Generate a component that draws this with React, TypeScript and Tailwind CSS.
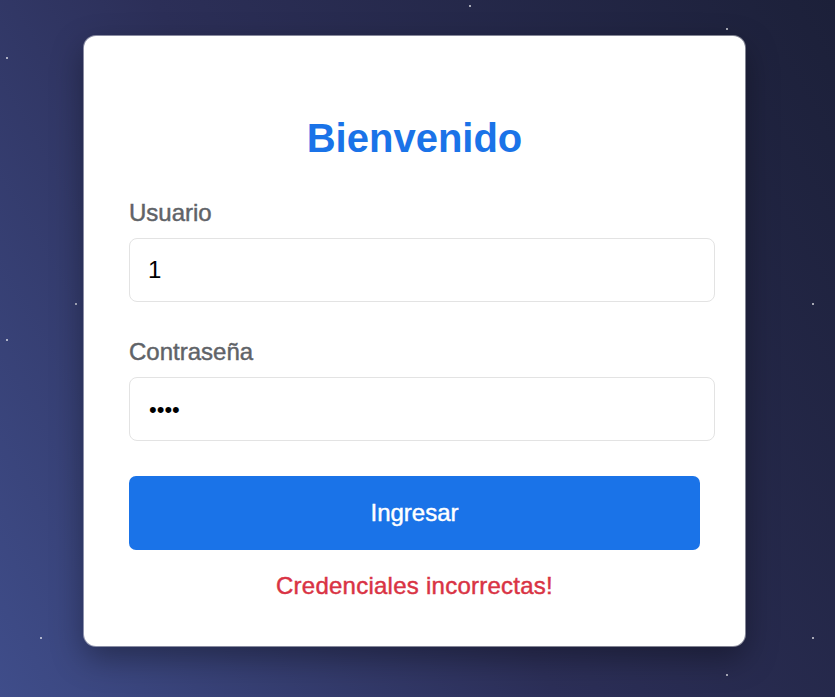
import React from "react";

const stars: Array<[number, number]> = [
  [6, 57],
  [469, 5],
  [726, 28],
  [75, 303],
  [6, 339],
  [812, 303],
  [40, 637],
  [812, 637],
  [726, 674],
];

export default function App() {
  return (
    <div
      className="relative w-[835px] h-[697px] overflow-hidden bg-[linear-gradient(60deg,#3f4d8a_0%,#2c2f58_45%,#1c2039_100%)] pt-[36px] pl-[84px]"
      style={{ fontFamily: '"Liberation Sans", Arial, sans-serif' }}
    >
      {stars.map(([x, y], i) => (
        <span
          key={i}
          className="absolute w-[2px] h-[2px] bg-white/80 rounded-full"
          style={{ left: x, top: y }}
        />
      ))}
      <div className="relative w-[661px] h-[610px] bg-white rounded-[12px] shadow-[0_0_0_1px_rgba(255,255,255,0.45),0_12px_32px_rgba(0,0,0,0.35)] pt-[79px] px-[45px] pb-[46px] flex flex-col">
        <h1 className="text-[40px] leading-[46px] font-bold text-[#1a73e8] text-center">
          Bienvenido
        </h1>
        <label className="mt-[38px] text-[24px] leading-[28px] font-medium text-[#5f6368] [-webkit-text-stroke:0.45px_#5f6368]">
          Usuario
        </label>
        <div className="mt-[11px] w-[586px] h-[64px] border border-[#e3e3e3] rounded-[8px] pl-[18px] flex items-center text-[24px] text-black">
          1
        </div>
        <label className="mt-[36px] text-[24px] leading-[28px] font-medium text-[#5f6368] [-webkit-text-stroke:0.45px_#5f6368]">
          Contraseña
        </label>
        <div className="mt-[11px] w-[586px] h-[64px] border border-[#e3e3e3] rounded-[8px] pl-[19px] flex items-center text-[22px] text-black">
          ••••
        </div>
        <button className="mt-[35px] w-full h-[74px] bg-[#1a73e8] rounded-[7px] text-white text-[24px] font-medium flex items-center justify-center [-webkit-text-stroke:0.45px_#ffffff]">
          Ingresar
        </button>
        <p className="mt-[22px] text-[24px] leading-[28px] tracking-[0.25px] text-[#d93344] text-center [-webkit-text-stroke:0.45px_#d93344]">
          Credenciales incorrectas!
        </p>
      </div>
    </div>
  );
}
